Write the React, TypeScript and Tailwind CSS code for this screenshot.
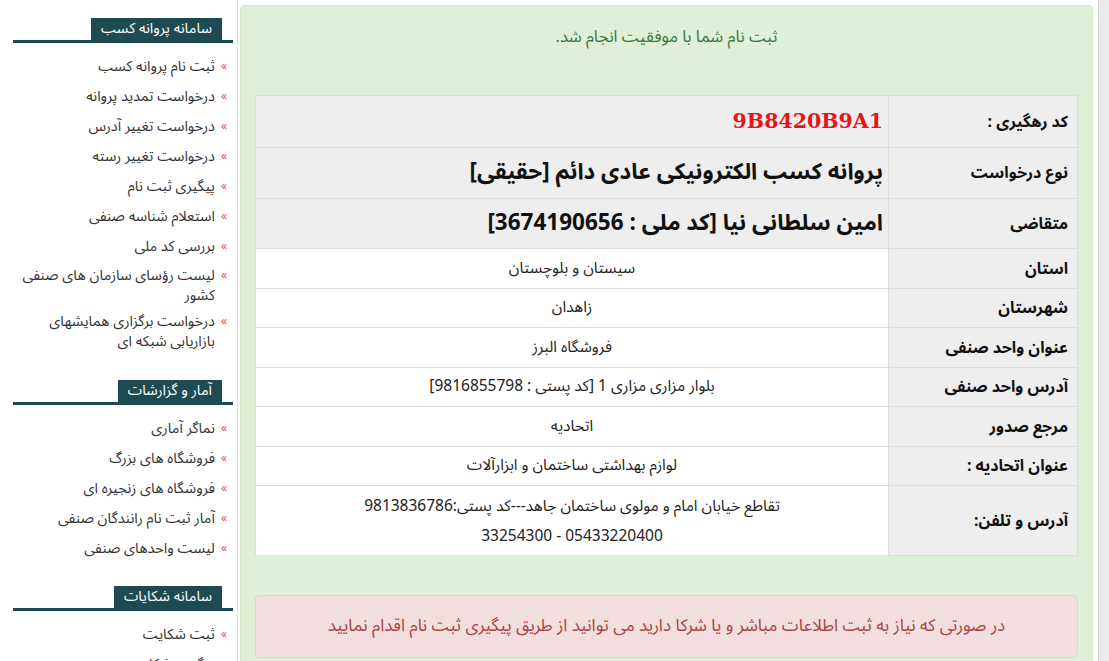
import React from "react";

const FONT = { fontFamily: '"Noto Sans Arabic", "DejaVu Sans", "Noto Sans", sans-serif' };

type Sec = { title: string; items: string[][]; mt: string };

const sections: Sec[] = [
  {
    title: "سامانه پروانه کسب",
    mt: "",
    items: [
      ["ثبت نام پروانه کسب"],
      ["درخواست تمدید پروانه"],
      ["درخواست تغییر آدرس"],
      ["درخواست تغییر رسته"],
      ["پیگیری ثبت نام"],
      ["استعلام شناسه صنفی"],
      ["بررسی کد ملی"],
      ["لیست رؤسای سازمان های صنفی", "کشور"],
      ["درخواست برگزاری همایشهای", "بازاریابی شبکه ای"],
    ],
  },
  {
    title: "آمار و گزارشات",
    mt: "mt-[26px]",
    items: [
      ["نماگر آماری"],
      ["فروشگاه های بزرگ"],
      ["فروشگاه های زنجیره ای"],
      ["آمار ثبت نام رانندگان صنفی"],
      ["لیست واحدهای صنفی"],
    ],
  },
  {
    title: "سامانه شکایات",
    mt: "mt-[22px]",
    items: [["ثبت شکایت"], ["پیگیری شکایت"]],
  },
];

function Sidebar() {
  return (
    <div className="w-[238px] shrink-0 border-r border-[#dcdcdc] bg-white pl-[13px] pr-[4px] pt-[18px]" dir="rtl">
      {sections.map((s, i) => (
        <div key={i} className={s.mt}>
          <div className="flex border-b-[3px] border-[#1e4a52] pr-[11px]">
            <div className="bg-[#1e4a52] px-[10px] text-[14.5px] leading-[22px] text-white">{s.title}</div>
          </div>
          <ul className="mt-[9px] pr-[6px]">
            {s.items.map((it, j) => (
              <li
                key={j}
                className={`flex items-start text-[14.5px] leading-[20px] text-[#333] ${it.length > 1 ? "pb-[2px] pt-[4px]" : "py-[5px]"}`}
              >
                <span className="ml-[6px] text-[12px] leading-[20px] text-[#d9534f]">»</span>
                <div>
                  {it.map((l, k) => (
                    <div key={k}>{l}</div>
                  ))}
                </div>
              </li>
            ))}
          </ul>
        </div>
      ))}
    </div>
  );
}

type Row = { label: string; value: React.ReactNode; big?: boolean; h: string };

function Table() {
  const rows: Row[] = [
    {
      label: "کد رهگیری :",
      value: (
        <span className="text-[20.5px] font-bold text-[#e8141b]" style={{ fontFamily: '"DejaVu Serif", "Liberation Serif", serif' }}>
          9B8420B9A1
        </span>
      ),
      big: true,
      h: "h-[51px]",
    },
    { label: "نوع درخواست", value: "پروانه کسب الکترونیکی عادی دائم [حقیقی]", big: true, h: "h-[51px]" },
    { label: "متقاضی", value: "امین سلطانی نیا [کد ملی : 3674190656]", big: true, h: "h-[50px]" },
    { label: "استان", value: "سیستان و بلوچستان", h: "h-[40px]" },
    { label: "شهرستان", value: "زاهدان", h: "h-[39px]" },
    { label: "عنوان واحد صنفی", value: "فروشگاه البرز", h: "h-[40px]" },
    { label: "آدرس واحد صنفی", value: "بلوار مزاری مزاری 1 [کد پستی : 9816855798]", h: "h-[39px]" },
    { label: "مرجع صدور", value: "اتحادیه", h: "h-[40px]" },
    { label: "عنوان اتحادیه :", value: "لوازم بهداشتی ساختمان و ابزارآلات", h: "h-[39px]" },
    {
      label: "آدرس و تلفن:",
      value: (
        <div className="leading-[30px]">
          <div>تقاطع خیابان امام و مولوی ساختمان جاهد---کد پستی:9813836786</div>
          <div>05433220400 - 33254300</div>
        </div>
      ),
      h: "h-[70px]",
    },
  ];
  return (
    <div className="mx-[14px] border border-[#dddddd]" dir="rtl">
      {rows.map((r, i) => (
        <div key={i} className={`flex ${r.h} ${i > 0 ? "border-t border-[#dddddd]" : ""}`}>
          <div className="flex w-[189px] shrink-0 items-center border-l border-[#dddddd] bg-[#eeeeee] pr-[9px] text-[16px] font-bold text-[#111]">
            {r.label}
          </div>
          {r.big ? (
            <div className="flex flex-1 items-center bg-[#eeeeee] pr-[5px] text-[22.5px] font-bold text-[#111]">{r.value}</div>
          ) : (
            <div className="flex flex-1 items-center justify-center bg-white text-center text-[15.5px] text-[#222]">{r.value}</div>
          )}
        </div>
      ))}
    </div>
  );
}

export default function App() {
  return (
    <div className="flex h-[661px] w-[1109px] overflow-hidden bg-white" style={FONT}>
      <Sidebar />
      <div className="ml-[2px] mt-[5px] h-[700px] w-[853px] shrink-0 rounded-[4px] border border-[#d6e9c6] bg-[#dff0d8]">
        <div className="pt-[21px] text-center text-[16.5px] leading-[20px] text-[#3c763d]" dir="rtl">
          ثبت نام شما با موفقیت انجام شد.
        </div>
        <div className="mt-[48px]">
          <Table />
        </div>
        <div
          className="mx-[14px] mt-[39px] flex h-[63px] items-center justify-center rounded-[4px] border border-[#ebccd1] bg-[#f2dede] text-[17px] text-[#a94442]"
          dir="rtl"
        >
          در صورتی که نیاز به ثبت اطلاعات مباشر و یا شرکا دارید می توانید از طریق پیگیری ثبت نام اقدام نمایید
        </div>
      </div>
      <div className="ml-[5px] flex-1 border-l border-[#d0d0d0] bg-[#ebebeb]" />
    </div>
  );
}
